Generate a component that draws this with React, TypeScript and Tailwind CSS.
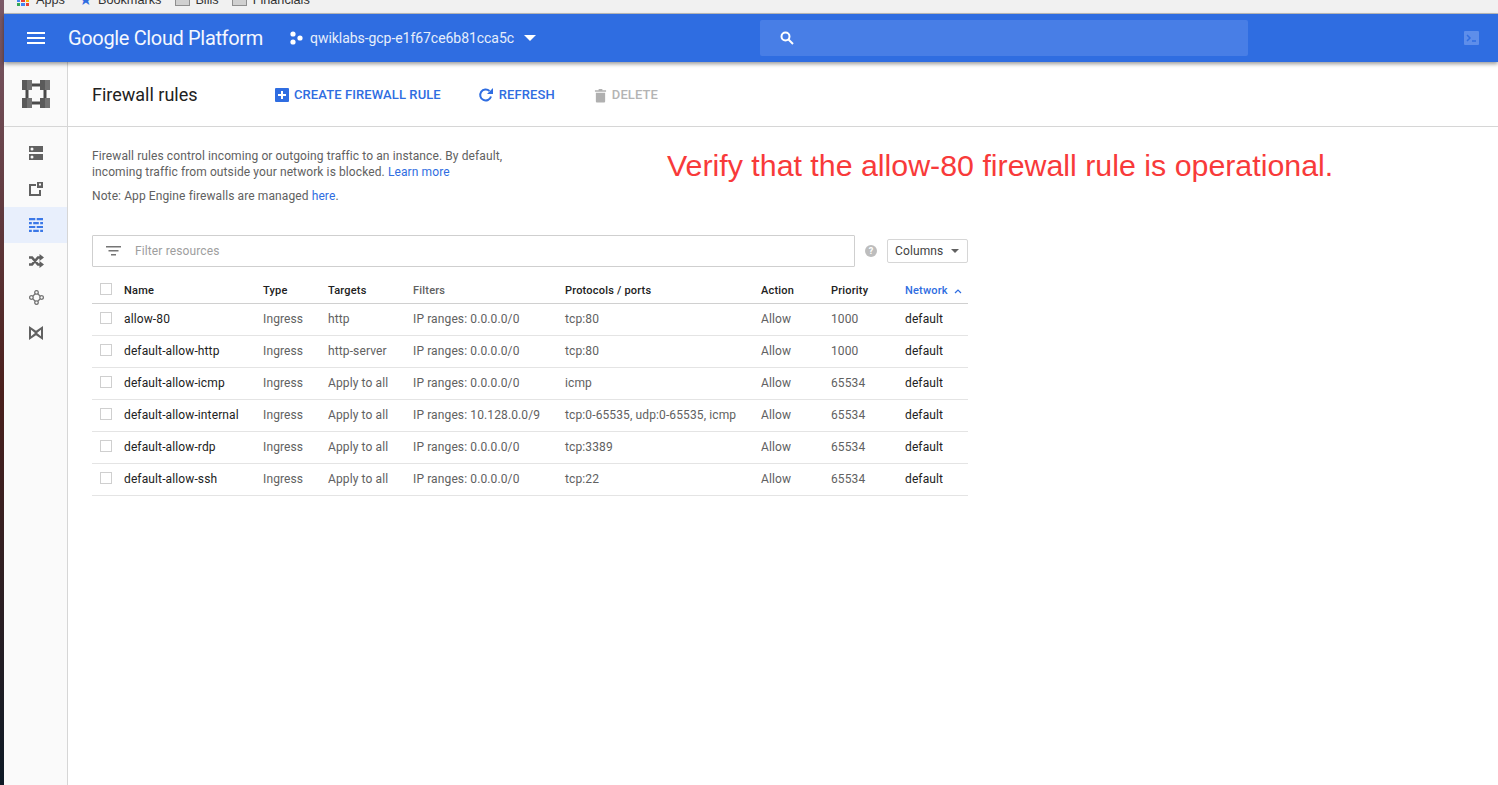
const rows = [
  { name: "allow-80", targets: "http", filters: "IP ranges: 0.0.0.0/0", ports: "tcp:80", priority: "1000" },
  { name: "default-allow-http", targets: "http-server", filters: "IP ranges: 0.0.0.0/0", ports: "tcp:80", priority: "1000" },
  { name: "default-allow-icmp", targets: "Apply to all", filters: "IP ranges: 0.0.0.0/0", ports: "icmp", priority: "65534" },
  { name: "default-allow-internal", targets: "Apply to all", filters: "IP ranges: 10.128.0.0/9", ports: "tcp:0-65535, udp:0-65535, icmp", priority: "65534" },
  { name: "default-allow-rdp", targets: "Apply to all", filters: "IP ranges: 0.0.0.0/0", ports: "tcp:3389", priority: "65534" },
  { name: "default-allow-ssh", targets: "Apply to all", filters: "IP ranges: 0.0.0.0/0", ports: "tcp:22", priority: "65534" },
];

const gridCols = "grid grid-cols-[32px_139px_65px_85px_152px_196px_70px_74px_63px] items-center";

function Checkbox() {
  return <span className="block h-3 w-3 border border-[#cfcfcf] bg-white" />;
}

function NetworkIcon() {
  return (
    <svg width="28" height="28" viewBox="0 0 28 28">
      <path d="M10 3.500h8v3h-8zM10 21.500h8v3h-8zM3.500 10h3v8h-3zM21.500 10h3v8h-3z" fill="#4a4a4a" />
      <path d="M0 0h5v10H0zM18 0h5v10h-5zM0 18h5v10H0zM18 18h5v10h-5z" fill="#5a5a5a" />
      <path d="M5 0h5v10H5zM23 0h5v10h-5zM5 18h5v10H5zM23 18h5v10h-5z" fill="#737373" />
    </svg>
  );
}

function SideIcon({ index }: { index: number }) {
  if (index === 0) {
    return (
      <svg width="14" height="14" viewBox="0 0 14 14" fill="#616161">
        <path fillRule="evenodd" d="M0 0h14v6H0zM1.500 3a1.500 1.500 0 1 0 3 0 1.500 1.500 0 1 0-3 0zM0 8h14v6H0zM1.500 11a1.500 1.500 0 1 0 3 0 1.500 1.500 0 1 0-3 0z" />
      </svg>
    );
  }
  if (index === 1) {
    return (
      <svg width="14" height="14" viewBox="0 0 14 14" fill="#616161">
        <path d="M0 2h7v2H2v8h8V8h2v6H0z" />
        <path fillRule="evenodd" d="M8 0h6v6H8zM10 1.500V3.500h2V1.500z" />
      </svg>
    );
  }
  if (index === 2) {
    return (
      <svg width="14" height="14" viewBox="0 0 14 14" fill="#3b78e7">
        <path d="M0 0h6.300v2.200H0zM7.700 0H14v2.200H7.700zM0 4h2.800v2.200H0zM4.200 4h5.600v2.200H4.200zM11.200 4H14v2.200h-2.800zM0 7.900h6.300v2.200H0zM7.700 7.900H14v2.200H7.700zM0 11.800h2.800V14H0zM4.200 11.800h5.600V14H4.200zM11.200 11.800H14V14h-2.800z" />
      </svg>
    );
  }
  if (index === 3) {
    return (
      <svg width="15" height="14" viewBox="0 0 15 14" fill="none" stroke="#5f5f5f" strokeWidth="2.600">
        <path d="M0 3.500h3l6 7h2M0 10.500h3l6-7h2" />
        <path d="M10.500 0 15 3.500 10.500 7zM10.500 7l4.500 3.500-4.500 3.500z" fill="#5f5f5f" stroke="none" />
      </svg>
    );
  }
  if (index === 4) {
    return (
      <svg width="15" height="15" viewBox="0 0 15 15" fill="none" stroke="#757575" strokeWidth="1.300">
        <path d="M7.500 2.500 2.500 7.500l5 5 5-5z" />
        <circle cx="7.500" cy="2.400" r="1.800" fill="#fafafa" />
        <circle cx="2.400" cy="7.500" r="1.800" fill="#fafafa" />
        <circle cx="12.600" cy="7.500" r="1.800" fill="#fafafa" />
        <circle cx="7.500" cy="12.600" r="1.800" fill="#fafafa" />
      </svg>
    );
  }
  return (
    <svg width="14" height="14" viewBox="0 0 14 14" fill="#616161">
      <path fillRule="evenodd" d="M0 0 7 4.800 14 0v14L7 9.200 0 14zM2 3.800v6.400L6 7zM12 3.800 8 7l4 3.200z" />
    </svg>
  );
}

export default function App() {
  return (
    <div className="flex h-[785px] w-[1498px] overflow-hidden bg-white font-['Roboto',sans-serif] text-[12px] tracking-[0.12px] text-[#616161]">
      {/* Desktop edge behind the browser window */}
      <div className="w-1 shrink-0 bg-linear-to-b from-[#7b5a68] via-[#4a1f1c] to-[#0d1a26]" />

      <div className="flex min-w-0 flex-1 flex-col">
        {/* Browser bookmarks bar, cut off by the crop */}
        <div className="flex h-[14px] shrink-0 items-end overflow-hidden border-b border-[#bdbdbd] bg-[#f1f1f1] pl-[13px] font-['Liberation_Sans',sans-serif] text-[12.7px] leading-[14px] tracking-normal text-[#333]">
          <span className="flex items-center gap-[7px] pb-[6px]">
            <span className="grid h-[12px] w-[12px] grid-cols-3 gap-px">
              <i className="bg-[#ea4335]" /><i className="bg-[#fbbc05]" /><i className="bg-[#34a853]" />
              <i className="bg-[#4285f4]" /><i className="bg-[#ea4335]" /><i className="bg-[#fbbc05]" />
              <i className="bg-[#34a853]" /><i className="bg-[#4285f4]" /><i className="bg-[#ea4335]" />
            </span>
            Apps
          </span>
          <span className="ml-[14px] flex items-center gap-[6px] pb-[6px]">
            <span className="text-[15px] leading-[14px] text-[#2f6de1]">★</span>
            Bookmarks
          </span>
          <span className="ml-[14px] flex items-center gap-[5px] pb-[6px]">
            <span className="h-[11px] w-[15px] border border-[#8f8f8f] bg-[#d0d0d0]" />
            Bills
          </span>
          <span className="ml-[13px] flex items-center gap-[6px] pb-[6px]">
            <span className="h-[11px] w-[15px] border border-[#8f8f8f] bg-[#d0d0d0]" />
            Financials
          </span>
        </div>

        {/* Blue header */}
        <header className="relative z-10 flex h-[48px] shrink-0 items-center bg-[#2f6de1] shadow-[0_2px_4px_rgba(0,0,0,0.4)]">
          <div className="ml-[23px] flex w-[18px] shrink-0 flex-col gap-[3px]">
            <span className="h-0.5 bg-white" />
            <span className="h-0.5 bg-white" />
            <span className="h-0.5 bg-white" />
          </div>
          <span className="ml-[23px] w-[199px] shrink-0 whitespace-nowrap text-[20px] tracking-[-0.35px] text-[#f4f7fe]">Google Cloud Platform</span>
          <svg className="ml-[22px] shrink-0" width="14" height="14" viewBox="0 0 14 14" fill="#fff">
            <circle cx="4" cy="3" r="2.600" />
            <circle cx="11" cy="7" r="2.600" />
            <circle cx="4" cy="11" r="2.600" />
          </svg>
          <span className="ml-[7px] w-[207px] shrink-0 whitespace-nowrap text-[14px] tracking-[-0.05px] text-[#e6edfb]">qwiklabs-gcp-e1f67ce6b81cca5c</span>
          <span className="ml-[7px] h-0 w-0 shrink-0 border-x-[6px] border-t-[6px] border-x-transparent border-t-white" />
          <div className="ml-[224px] flex h-9 w-[488px] shrink-0 items-center rounded-[2px] bg-[#487ee6] pl-[20px]">
            <svg width="14" height="14" viewBox="0 0 14 14" fill="none" stroke="#fff" strokeWidth="2">
              <circle cx="5.500" cy="5.500" r="4" />
              <path d="m8.500 8.500 4.500 4.500" />
            </svg>
          </div>
          <div className="ml-[216px] flex h-[14px] w-[15px] shrink-0 items-center justify-center rounded-[1px] bg-[#5e8eea]">
            <svg width="11" height="10" viewBox="0 0 11 10" fill="none" stroke="#2f6de1" strokeWidth="1.500">
              <path d="m1 2 3 3-3 3M6 8h4" />
            </svg>
          </div>
        </header>

        <div className="flex min-h-0 flex-1">
          {/* Left nav */}
          <aside className="w-16 shrink-0 border-r border-[#d6d6d6] bg-[#fafafa]">
            <div className="flex h-[65px] items-center justify-center border-b border-[#d6d6d6] pl-px">
              <NetworkIcon />
            </div>
            <nav className="pt-[8px]">
              {[0, 1, 2, 3, 4, 5].map((i) => (
                <div key={i} className={`flex h-9 items-center justify-center pl-px ${i === 2 ? "bg-[#e8effc]" : ""}`}>
                  <SideIcon index={i} />
                </div>
              ))}
            </nav>
          </aside>

          <main className="min-w-0 flex-1">
            {/* Title + actions */}
            <div className="flex h-[65px] items-center border-b border-[#d6d6d6] pl-6 text-[13px] font-medium tracking-[0.1px]">
              <h1 className="w-[183px] shrink-0 text-[18px] font-normal tracking-normal text-[#212121]">Firewall rules</h1>
              <span className="mt-[2px] flex items-center text-[#2f6de1]">
                <svg width="14" height="14" viewBox="0 0 14 14" className="mr-[5px]">
                  <rect width="14" height="14" rx="1" fill="#2f6de1" />
                  <path d="M3 7h8M7 3v8" stroke="#fff" strokeWidth="2" />
                </svg>
                CREATE FIREWALL RULE
              </span>
              <span className="ml-[37px] mt-[2px] flex items-center text-[#2f6de1]">
                <svg width="16" height="16" viewBox="0 0 16 16" className="mr-[5px]" fill="none">
                  <path d="M13 9.500A5.500 5.500 0 1 1 11.500 4" stroke="#2f6de1" strokeWidth="2" />
                  <path d="M15 1v6H9z" fill="#2f6de1" />
                </svg>
                REFRESH
              </span>
              <span className="ml-[39px] mt-[2px] flex items-center text-[#b4b4b4]">
                <svg width="13" height="16" viewBox="0 0 14 16" className="mr-[5px]" fill="#b0b0b0">
                  <path d="M1 3h12v1.500H1zM5 1.500h4V3H5zM2 5.500h10V15a1 1 0 0 1-1 1H3a1 1 0 0 1-1-1z" />
                </svg>
                DELETE
              </span>
            </div>

            <div className="pl-6 pt-[21px]">
              {/* Intro text and annotation */}
              <div className="flex h-[87px] items-start">
                <div className="w-[575px] shrink-0 leading-4 tracking-[0.1px]">
                  <p>Firewall rules control incoming or outgoing traffic to an instance. By default,<br />incoming traffic from outside your network is blocked. <span className="text-[#2f6de1]">Learn more</span></p>
                  <p className="mt-2">Note: App Engine firewalls are managed <span className="text-[#2f6de1]">here</span>.</p>
                </div>
                <p className="whitespace-nowrap font-['Liberation_Sans',sans-serif] text-[30.35px] leading-[36px] tracking-normal text-[#f83a3a]">Verify that the allow-80 firewall rule is operational.</p>
              </div>

              {/* Filter */}
              <div className="flex w-[876px] items-center">
                <div className="flex h-8 w-[763px] items-center rounded-[1px] border border-[#cfcfcf] pl-[13px]">
                  <svg width="15" height="10" viewBox="0 0 15 10" fill="#757575">
                    <path d="M0 0h15v1.500H0zM2.500 4h10v1.500h-10zM5 8h5v1.500H5z" />
                  </svg>
                  <span className="ml-[14px] text-[#9e9e9e]">Filter resources</span>
                </div>
                <span className="ml-[10px] flex h-3 w-3 items-center justify-center rounded-full bg-[#bdbdbd] text-[9px] font-bold leading-none text-white">?</span>
                <div className="ml-[10px] flex h-6 w-[81px] items-center rounded-[2px] border border-[#d6d6d6] pl-[7px] text-[#424242]">
                  Columns
                  <span className="ml-[8px] h-0 w-0 border-x-[4px] border-t-[4px] border-x-transparent border-t-[#616161]" />
                </div>
              </div>

              {/* Table */}
              <div className="mt-[10px] w-[876px]">
                <div className={`${gridCols} h-[27px] border-b border-[#d0d0d0] pt-[2px] text-[11px] font-medium tracking-[0.2px] text-[#212121]`}>
                  <span className="-mt-[4px] pl-[8px]"><Checkbox /></span>
                  <span>Name</span>
                  <span>Type</span>
                  <span>Targets</span>
                  <span className="text-[#616161]">Filters</span>
                  <span>Protocols / ports</span>
                  <span>Action</span>
                  <span>Priority</span>
                  <span className="flex items-center text-[#2f6de1]">
                    Network
                    <svg width="8" height="5" viewBox="0 0 8 5" fill="none" stroke="#2f6de1" strokeWidth="1.200" className="ml-[6px]">
                      <path d="m1 4 3-3 3 3" />
                    </svg>
                  </span>
                </div>
                {rows.map((r) => (
                  <div key={r.name} className={`${gridCols} h-8 border-b border-[#e4e4e4] pb-px`}>
                    <span className="-mt-[3px] pl-[8px]"><Checkbox /></span>
                    <span className="text-[#212121]">{r.name}</span>
                    <span>Ingress</span>
                    <span>{r.targets}</span>
                    <span>{r.filters}</span>
                    <span>{r.ports}</span>
                    <span>Allow</span>
                    <span>{r.priority}</span>
                    <span className="text-[#212121]">default</span>
                  </div>
                ))}
              </div>
            </div>
          </main>
        </div>
      </div>
    </div>
  );
}
